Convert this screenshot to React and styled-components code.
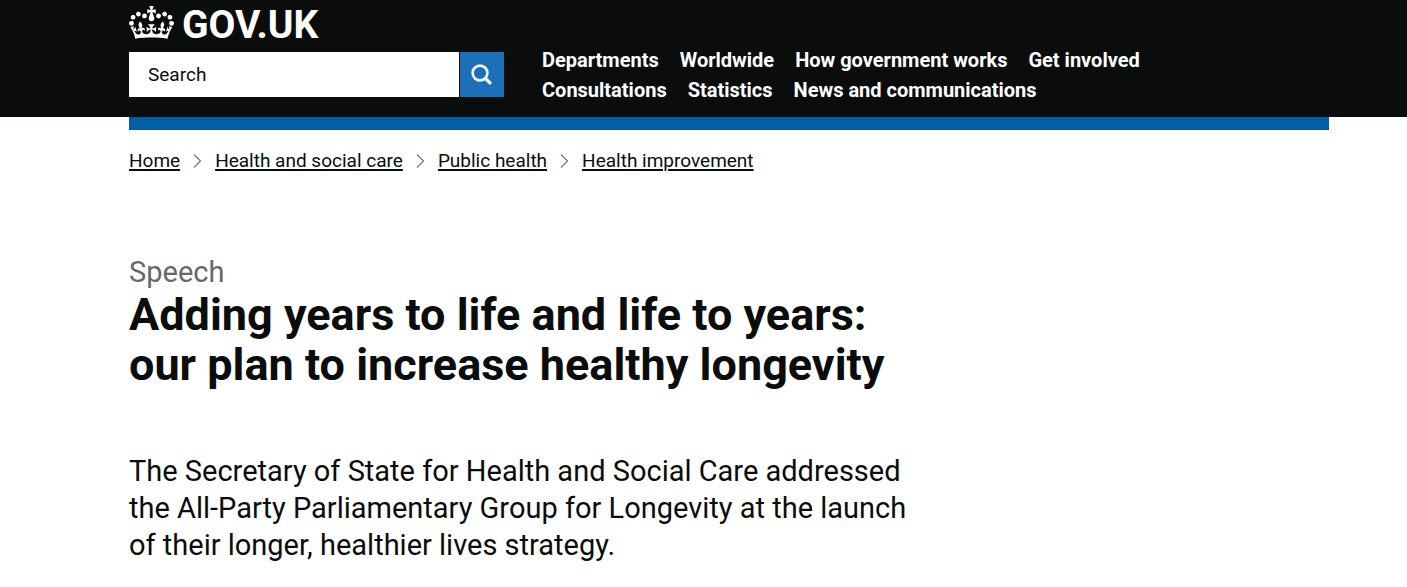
import React from "react";
import styled, { createGlobalStyle } from "styled-components";

const GlobalStyle = createGlobalStyle`
  *, *::before, *::after { box-sizing: border-box; }
  body {
    margin: 0;
    background: #ffffff;
    color: #0b0c0c;
    font-family: Roboto, "Liberation Sans", sans-serif;
  }
`;

const Container = styled.div`
  padding: 0 78px 0 129px;
`;

const Header = styled.header`
  background: #0b0c0c;
  color: #ffffff;
`;

const HeaderRow = styled(Container)`
  display: flex;
  align-items: flex-end;
  gap: 38px;
  padding-bottom: 12px;
`;

const Brand = styled.div`
  flex: 0 0 375px;
  padding-bottom: 8px;
`;

const Logo = styled.a`
  display: flex;
  align-items: flex-start;
  gap: 8px;
  height: 52px;
  color: #ffffff;
  font-size: 39px;
  font-weight: 700;
  line-height: 50px;
  text-decoration: none;
`;

const Crown = styled.svg`
  width: 45px;
  height: 33px;
  margin-top: 6px;
  fill: currentColor;
`;

const SearchForm = styled.form`
  display: flex;
  gap: 1px;
  height: 45px;
`;

const SearchInput = styled.input`
  flex: 1;
  min-width: 0;
  padding: 0 19px;
  border: 0;
  border-radius: 0;
  background: #ffffff;
  color: #0b0c0c;
  font: inherit;
  font-size: 19px;

  &::placeholder {
    color: #0b0c0c;
    opacity: 1;
  }
`;

const SearchButton = styled.button`
  display: flex;
  align-items: center;
  justify-content: center;
  width: 44px;
  padding: 0;
  border: 0;
  background: #1d70b8;
  color: #f0f5fa;
`;

const Nav = styled.nav`
  flex: 0 1 640px;
`;

const NavList = styled.ul`
  display: flex;
  flex-wrap: wrap;
  column-gap: 21px;
  margin: 0;
  padding: 0;
  list-style: none;
`;

const NavLink = styled.a`
  color: #ffffff;
  font-size: 20px;
  font-weight: 700;
  line-height: 30px;
  text-decoration: none;
`;

const BlueBar = styled.div`
  height: 13px;
  background: #005ea5;
`;

const Crumbs = styled.ol`
  display: flex;
  flex-wrap: wrap;
  align-items: center;
  column-gap: 13px;
  margin: 0;
  padding: 18px 0 0;
  list-style: none;
`;

const Crumb = styled.li`
  display: flex;
  align-items: center;
  gap: 13px;
`;

const CrumbLink = styled.a`
  color: #0b0c0c;
  font-size: 19px;
  line-height: 25px;
  text-decoration: underline;
  text-decoration-thickness: 2px;
  text-underline-offset: 2px;
`;

const Article = styled.main`
  padding-top: 82px;
`;

const Kind = styled.p`
  margin: 0;
  color: #626a6e;
  font-size: 29px;
  line-height: 35px;
`;

const Title = styled.h1`
  max-width: 800px;
  margin: 0;
  font-size: 45px;
  font-weight: 700;
  line-height: 50px;
`;

const Lead = styled.p`
  max-width: 800px;
  margin: 63px 0 0;
  font-size: 29px;
  line-height: 37px;
`;

const navItems = [
  "Departments",
  "Worldwide",
  "How government works",
  "Get involved",
  "Consultations",
  "Statistics",
  "News and communications",
];

const crumbs = ["Home", "Health and social care", "Public health", "Health improvement"];

function CrownIcon() {
  return (
    <Crown viewBox="0 0 132 97" aria-hidden="true">
      <path
        fillRule="evenodd"
        d="M25 30.2c3.5 1.5 7.7-.2 9.1-3.7 1.5-3.6-.2-7.8-3.9-9.2-3.6-1.4-7.6.3-9.1 3.9-1.4 3.5.3 7.5 3.9 9zM9 39.5c3.6 1.5 7.8-.2 9.2-3.7 1.5-3.6-.2-7.8-3.9-9.1-3.6-1.5-7.6.2-9.1 3.8-1.4 3.5.3 7.5 3.8 9zM4.4 57.2c3.5 1.5 7.7-.2 9.1-3.8 1.5-3.6-.2-7.7-3.9-9.1-3.5-1.5-7.6.3-9.1 3.8-1.4 3.5.3 7.6 3.9 9.1zm38.3-21.4c3.5 1.5 7.7-.2 9.1-3.8 1.5-3.6-.2-7.7-3.9-9.1-3.6-1.5-7.6.3-9.1 3.8-1.3 3.6.4 7.7 3.9 9.1zm64.4-5.6c-3.6 1.5-7.8-.2-9.1-3.7-1.5-3.6.2-7.8 3.8-9.2 3.6-1.4 7.7.3 9.2 3.9 1.3 3.5-.4 7.5-3.9 9zm15.9 9.3c-3.6 1.5-7.7-.2-9.1-3.7-1.5-3.6.2-7.8 3.7-9.1 3.6-1.5 7.7.2 9.2 3.8 1.5 3.5-.3 7.5-3.8 9zm4.7 17.7c-3.6 1.5-7.8-.2-9.2-3.8-1.5-3.6.2-7.7 3.9-9.1 3.6-1.5 7.7.3 9.2 3.8 1.3 3.5-.4 7.6-3.9 9.1zM89.3 35.8c-3.6 1.5-7.8-.2-9.2-3.8-1.4-3.6.2-7.7 3.9-9.1 3.6-1.5 7.7.3 9.2 3.8 1.4 3.6-.3 7.7-3.9 9.1zM69.7 17.7l8.9 4.7V9.3l-8.9 2.8c-.2-.3-.5-.6-.9-.9L72.4 0H59.6l3.5 11.2c-.3.3-.6.5-.9.9l-8.8-2.8v13.1l8.8-4.7c.3.3.6.7.9.9l-5 15.4v.1c-.2.8-.4 1.6-.4 2.4 0 4.1 3.1 7.5 7 8.1h.2c.3 0 .7.1 1 .1.4 0 .7 0 1-.1h.2c4-.6 7.1-4.1 7.1-8.1 0-.8-.1-1.7-.4-2.4V34l-5.1-15.4c.4-.2.7-.6 1-.9zM66 92.8c16.9 0 32.8 1.1 47.1 3.2 4-16.9 8.9-26.7 14-33.5l-9.6-3.4c1 4.9 1.1 7.2 0 10.2-1.5-1.4-3-4.3-4.2-8.7L108.6 76c2.8-2 5-3.2 7.5-3.3-4.4 9.4-10 11.9-13.6 11.2-4.3-.8-6.3-4.6-5.6-7.9 1-4.7 5.7-5.9 8-.5 4.3-8.7-3-11.4-7.6-8.8 7.1-7.2 7.9-13.5 2.1-21.1-8 6.1-8.1 12.3-4.5 20.8-4.7-5.4-12.1-2.5-9.5 6.2 3.4-5.2 7.9-2 7.2 3.1-.6 4.3-6.4 7.8-13.5 7.2-10.3-.9-10.9-8-11.2-13.8 2.5-.5 7.1 1.8 11 7.3L80.2 60c-4.1 4.4-8 5.3-12.3 5.4 1.4-4.4 8-11.6 8-11.6H55.5s6.4 7.2 7.9 11.6c-4.2-.1-8-1-12.3-5.4l1.4 16.4c3.9-5.5 8.5-7.7 10.9-7.3-.3 5.8-.9 12.8-11.1 13.8-7.2.6-12.9-2.9-13.5-7.2-.7-5 3.8-8.3 7.1-3.1 2.7-8.7-4.6-11.6-9.4-6.2 3.7-8.5 3.6-14.7-4.6-20.8-5.8 7.6-5 13.9 2.2 21.1-4.7-2.6-11.9.1-7.7 8.8 2.3-5.5 7.1-4.2 8.1.5.7 3.3-1.3 7.1-5.7 7.9-3.5.7-9-1.8-13.5-11.2 2.5.1 4.7 1.3 7.5 3.3l-4.7-15.4c-1.2 4.4-2.7 7.2-4.3 8.7-1.1-3-.9-5.3 0-10.2l-9.5 3.4c5 6.9 9.9 16.7 14 33.5 14.8-2.1 30.8-3.2 47.7-3.2z"
      />
    </Crown>
  );
}

function SearchIcon() {
  return (
    <svg width="22" height="22" viewBox="0 0 22 22" fill="none" stroke="currentColor" aria-hidden="true">
      <circle cx="9" cy="9" r="7.4" strokeWidth="2.6" />
      <path d="M14.5 14.5l5.4 5.4" strokeWidth="3.4" />
    </svg>
  );
}

function Chevron() {
  return (
    <svg width="9" height="14" viewBox="0 0 9 14" fill="none" stroke="#6f777b" aria-hidden="true">
      <path d="M1 0.5L7.5 7L1 13.5" strokeWidth="1.2" />
    </svg>
  );
}

export default function App() {
  return (
    <>
      <GlobalStyle />
      <Header>
        <HeaderRow>
          <Brand>
            <Logo href="#">
              <CrownIcon />
              GOV.UK
            </Logo>
            <SearchForm role="search">
              <SearchInput type="text" aria-label="Search GOV.UK" placeholder="Search" />
              <SearchButton type="submit" aria-label="Submit search">
                <SearchIcon />
              </SearchButton>
            </SearchForm>
          </Brand>
          <Nav aria-label="Top level">
            <NavList>
              {navItems.map((item) => (
                <li key={item}>
                  <NavLink href="#">{item}</NavLink>
                </li>
              ))}
            </NavList>
          </Nav>
        </HeaderRow>
      </Header>
      <Container>
        <BlueBar />
        <nav aria-label="Breadcrumb">
          <Crumbs>
            {crumbs.map((crumb, index) => (
              <Crumb key={crumb}>
                {index > 0 && <Chevron />}
                <CrumbLink href="#">{crumb}</CrumbLink>
              </Crumb>
            ))}
          </Crumbs>
        </nav>
        <Article>
          <Kind>Speech</Kind>
          <Title>Adding years to life and life to years: our plan to increase healthy longevity</Title>
          <Lead>
            The Secretary of State for Health and Social Care addressed the All-Party Parliamentary
            Group for Longevity at the launch of their longer, healthier lives strategy.
          </Lead>
        </Article>
      </Container>
    </>
  );
}
